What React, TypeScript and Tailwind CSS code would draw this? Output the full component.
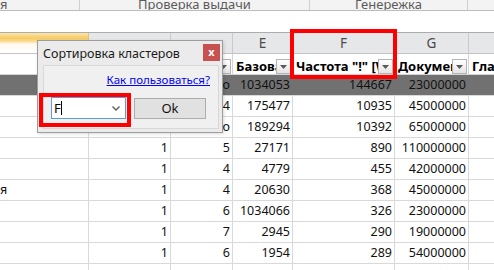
import React from "react";

type Row = {
  a?: string;
  c?: string;
  d?: string;
  e: string;
  f: string;
  g: string;
  dark?: boolean;
};

const rows: Row[] = [
  { c: "1", d: "о", e: "1034053", f: "144667", g: "23000000", dark: true },
  { c: "1", d: "4", e: "175477", f: "10935", g: "45000000" },
  { c: "1", d: "о", e: "189294", f: "10392", g: "65000000" },
  { c: "1", d: "5", e: "27171", f: "890", g: "110000000" },
  { c: "1", d: "4", e: "4779", f: "455", g: "42000000" },
  { a: "я", c: "1", d: "4", e: "20630", f: "368", g: "45000000" },
  { c: "1", d: "6", e: "1034066", f: "326", g: "23000000" },
  { c: "1", d: "7", e: "2945", f: "290", g: "19000000" },
  { c: "1", d: "6", e: "1954", f: "289", g: "54000000" },
  { e: "", f: "", g: "" },
];

function FilterButton() {
  return (
    <div className="mr-[1px] flex h-[15px] w-[15px] shrink-0 items-center justify-center border border-[#b4b4b4] bg-gradient-to-b from-white to-[#e4e4e4]">
      <svg width="7" height="4" viewBox="0 0 7 4">
        <path d="M0 0h7L3.5 4z" fill="#5a5a5a" />
      </svg>
    </div>
  );
}

function FilterCell({ label, w, last }: { label: string; w: string; last?: boolean }) {
  return (
    <div className={`${w} flex h-full items-end ${last ? "flex-1" : "shrink-0 border-r border-[#d4d4d4]"}`}>
      <span className="min-w-0 flex-1 overflow-hidden whitespace-nowrap pl-[3px] text-[13px] font-bold leading-[15px] text-black">
        {label}
      </span>
      {!last && <FilterButton />}
    </div>
  );
}

export default function App() {
  const cell = "flex h-full shrink-0 items-center justify-end border-r pr-[2px]";

  return (
    <div className="relative h-[270px] w-[494px] overflow-hidden bg-white font-['Noto_Sans',sans-serif]">
      {/* ribbon group captions, cut at the top */}
      <div className="flex h-[11px] overflow-hidden border-b border-[#bcbcbc] bg-[#f3f3f3] text-[13px] text-[#5b5b5b]">
        <div className="flex h-full w-[80px] items-end border-r border-[#d0d0d0]">
          <span className="mb-[-1px] leading-[14px]">я</span>
        </div>
        <div className="flex h-full w-[230px] items-end justify-center border-r border-[#d0d0d0]">
          <span className="mb-[-1px] leading-[14px]">Проверка выдачи</span>
        </div>
        <div className="flex h-full w-[158px] items-end justify-center border-r border-[#d0d0d0]">
          <span className="mb-[-1px] leading-[14px]">Генережка</span>
        </div>
        <div className="flex-1" />
      </div>

      {/* formula bar */}
      <div className="h-[22px] border-b border-[#acacac] bg-white" />

      {/* column letters */}
      <div className="flex h-[21px] border-b border-[#c4c4c4] bg-[#e6e7e9] text-[13.5px] text-[#4a4a4a]">
        <div className="h-full w-[89px] shrink-0 border-r border-[#e2c27a] bg-[linear-gradient(to_bottom,#fbe6b0_0px,#f6cb62_5px,#f9d98c_8px,#fffaf0_11px,#ffffff_20px)]" />
        <div className="h-full w-[82px] shrink-0 border-r border-[#c8cacd]" />
        <div className="h-full w-[62px] shrink-0 border-r border-[#c8cacd]" />
        <div className="flex h-full w-[60px] shrink-0 items-center justify-center border-r border-[#c8cacd] pt-[1px]">E</div>
        <div className="flex h-full w-[102px] shrink-0 items-center justify-center border-r border-[#c8cacd] pt-[1px]">F</div>
        <div className="flex h-full w-[74px] shrink-0 items-center justify-center border-r border-[#c8cacd] pt-[1px]">G</div>
        <div className="flex-1" />
      </div>

      {/* filter header row */}
      <div className="flex h-[21px] border-b border-[#d4d4d4]">
        <FilterCell w="w-[89px]" label="" />
        <FilterCell w="w-[82px]" label="Группа" />
        <FilterCell w="w-[62px]" label="Тип" />
        <FilterCell w="w-[60px]" label="Базовая частота" />
        <FilterCell w="w-[102px]" label='Частота "!" [WS]' />
        <FilterCell w="w-[74px]" label="Документов" />
        <FilterCell w="" label="Главная" last />
      </div>

      {/* data */}
      {rows.map((r, i) => {
        const line = r.dark ? "border-transparent" : "border-[#d9d9d9]";
        return (
          <div
            key={i}
            className={`flex h-[21px] border-b border-[#d9d9d9] text-[12.5px] text-[#111] ${r.dark ? "bg-[#717171]" : "bg-white"}`}
          >
            <div className={`flex h-full w-[89px] shrink-0 items-center border-r ${line}`}>
              <span>{r.a}</span>
            </div>
            <div className={`${cell} w-[82px] ${line}`}>{r.c}</div>
            <div className={`${cell} w-[62px] ${line}`}>{r.d}</div>
            <div className={`${cell} w-[60px] ${line}`}>{r.e}</div>
            <div className={`${cell} w-[102px] ${line}`}>{r.f}</div>
            <div className={`${cell} w-[74px] ${line}`}>{r.g}</div>
            <div className="flex-1" />
          </div>
        );
      })}

      {/* red frame around column F */}
      <div className="absolute left-[290px] top-[29px] h-[50px] w-[107px] border-4 border-[#ff0000]" />

      {/* dialog */}
      <div className="absolute left-[37px] top-[40px] flex h-[93px] w-[186px] flex-col border border-[#9d9d9d] bg-[#ebebeb] shadow-[1px_1px_3px_rgba(0,0,0,0.15)]">
        <div className="flex h-[24px] shrink-0 items-start">
          <span className="pl-[5px] pt-[4px] text-[12.5px] leading-[17px] text-[#1b1b1b]">Сортировка кластеров</span>
          <div className="ml-auto mr-[2px] mt-[3px] flex h-[17px] w-[17px] items-center justify-center bg-[#c75050] pb-[2px] text-[11px] font-bold leading-none text-white">
            x
          </div>
        </div>
        <div className="mb-[3px] ml-[5px] mr-[3px] flex flex-1 flex-col border border-[#d8d8d8] bg-[#f0f0f0]">
          <div className="flex h-[31px] shrink-0 justify-end pr-[8px] pt-[6px]">
            <span className="text-[11.5px] leading-[16px] text-[#0000ff] underline">Как пользоваться?</span>
          </div>
          <div className="flex items-start gap-[8px] pl-[7px]">
            <div className="flex h-[22px] w-[75px] items-center border border-[#5a9ee4] bg-white pl-[2px]">
              <span className="text-[13px] leading-none text-black">F</span>
              <span className="h-[14px] w-[1px] bg-black" />
              <svg className="ml-auto mr-[5px]" width="8" height="5" viewBox="0 0 8 5">
                <path d="M0.5 0.5L4 4L7.5 0.5" fill="none" stroke="#5d5d5d" strokeWidth="1.4" />
              </svg>
            </div>
            <div className="mt-[1px] flex h-[21px] w-[72px] items-center justify-center border border-[#adadad] bg-[#e1e1e1] text-[13px] text-[#111]">
              Ok
            </div>
          </div>
        </div>
      </div>

      {/* red frame around the combo */}
      <div className="absolute left-[39px] top-[93px] h-[34px] w-[92px] border-4 border-[#ff0000]" />
    </div>
  );
}
